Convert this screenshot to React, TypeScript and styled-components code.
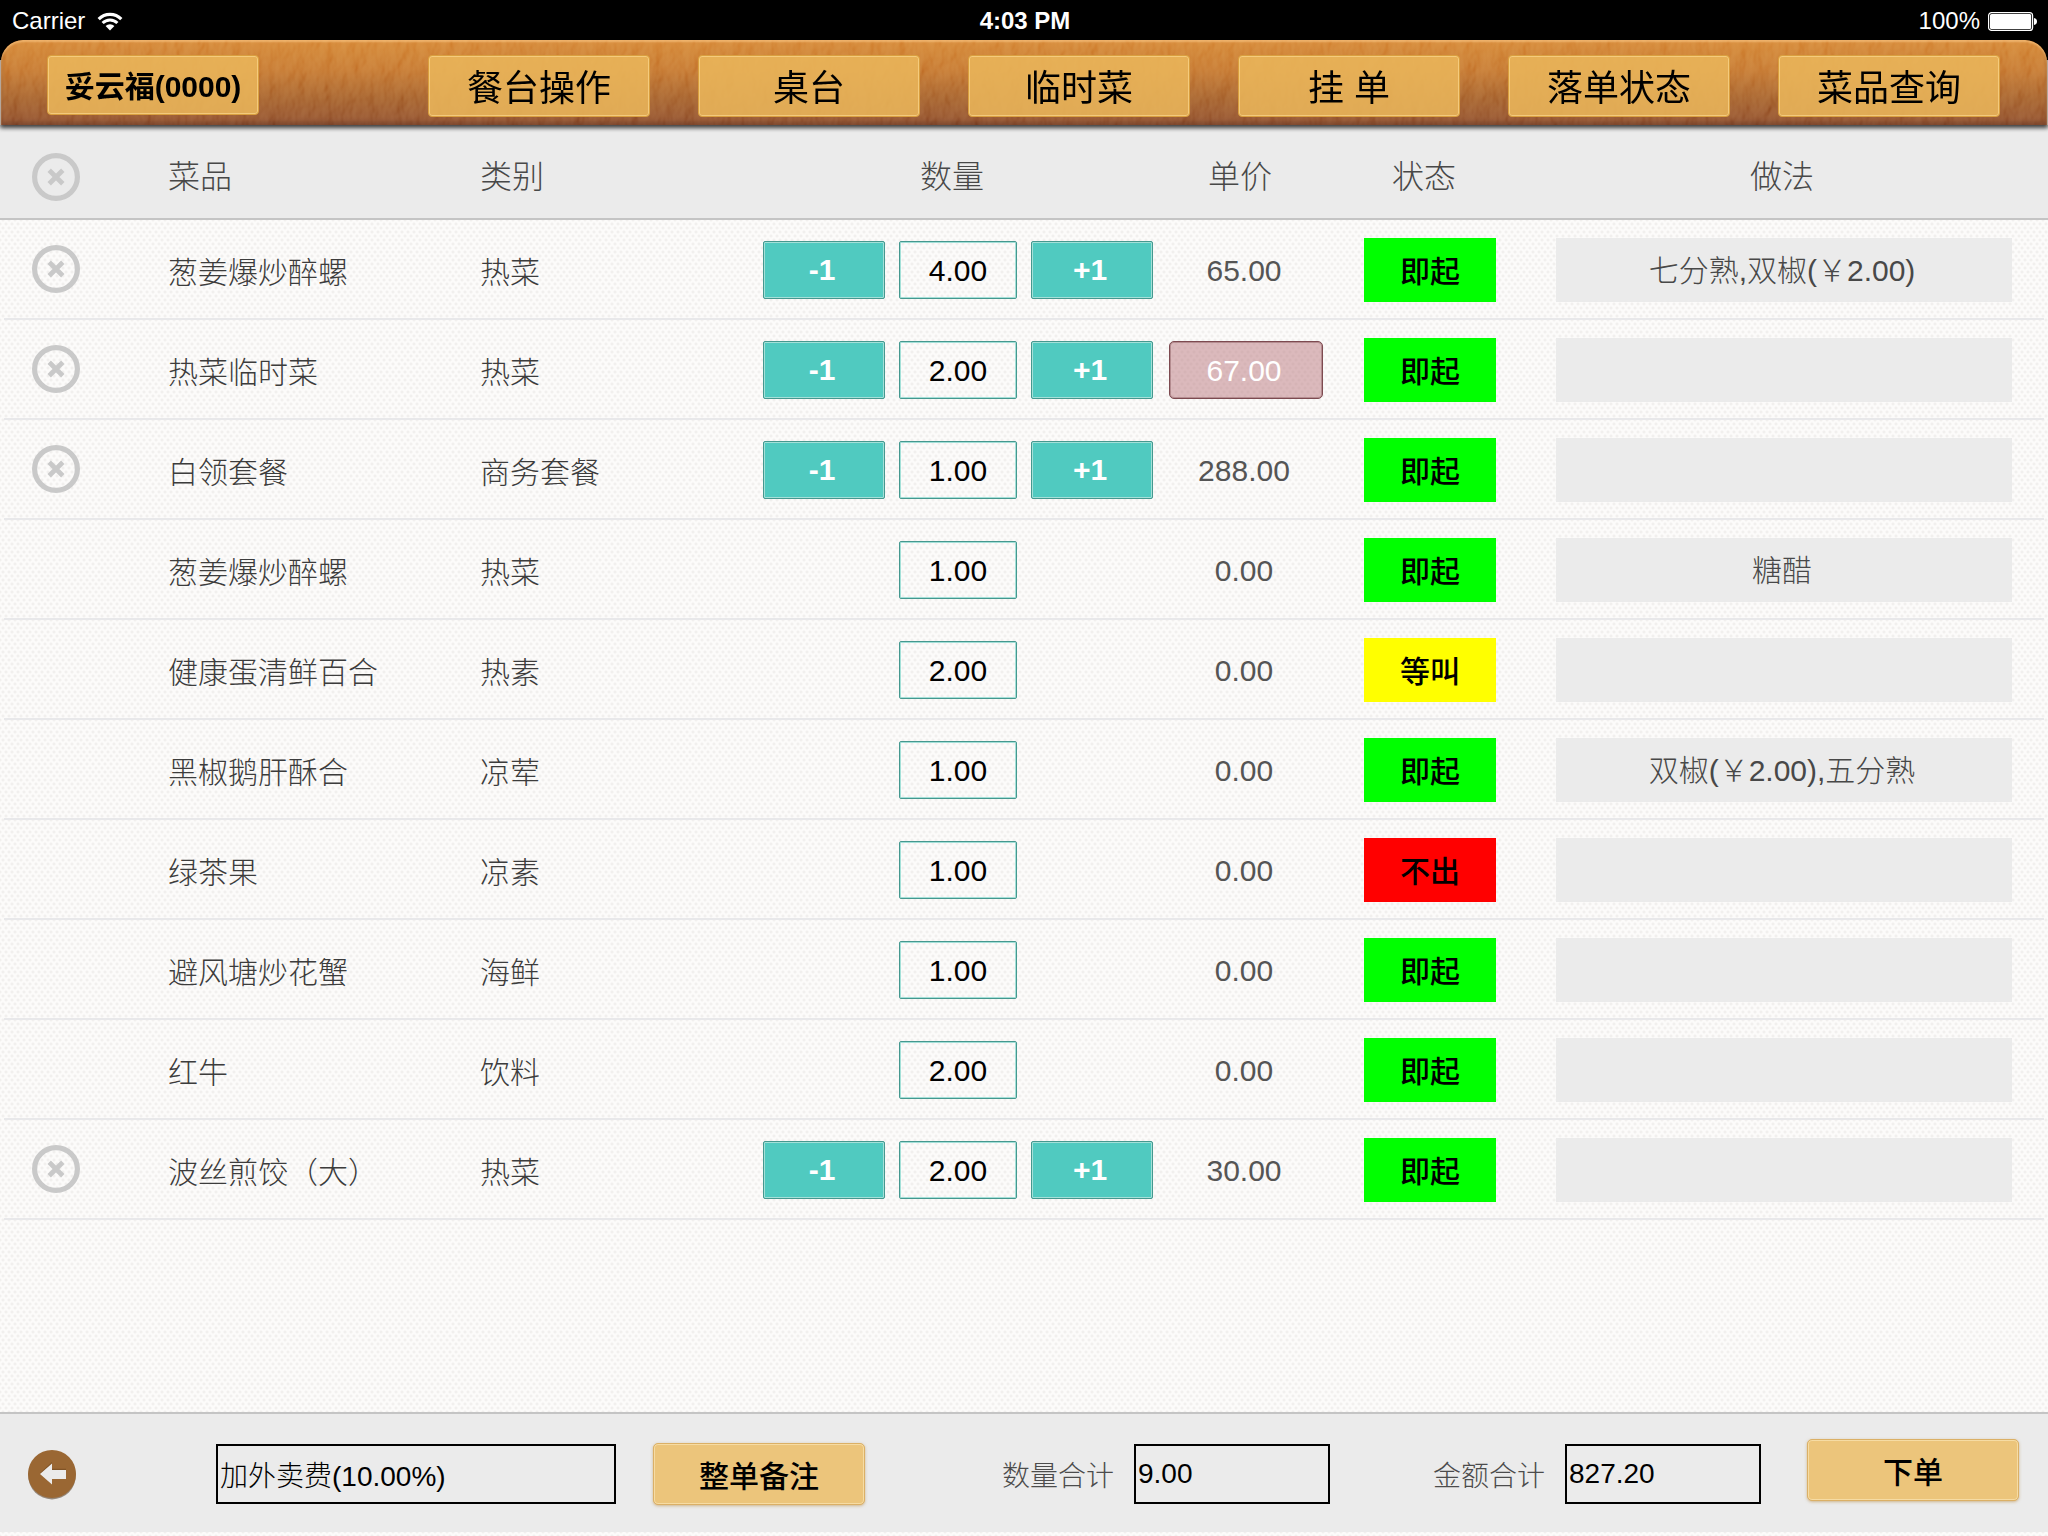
import React, { useState } from "react";
import styled, { createGlobalStyle, css } from "styled-components";

const GlobalStyle = createGlobalStyle`
  * { box-sizing: border-box; }
  body {
    margin: 0;
    background-color: #fcfbfa;
    background-image:
      radial-gradient(circle, rgba(120, 110, 100, 0.08) 0 1px, transparent 2px),
      radial-gradient(circle, rgba(120, 110, 100, 0.08) 0 1px, transparent 2px);
    background-size: 6px 8px;
    background-position: 0 0, 3px 4px;
    font-family: "Liberation Sans", "Noto Sans CJK SC", sans-serif;
    color: #555;
  }
  button, input {
    font-family: inherit;
    margin: 0;
    padding: 0;
    border: 0;
    background: none;
    border-radius: 0;
    outline: none;
  }
  button { cursor: pointer; }
`;

const Page = styled.div`
  min-height: 100vh;
  padding-bottom: 4px;
  display: flex;
  flex-direction: column;
`;

const StatusBar = styled.div`
  height: 40px;
  padding: 2px 10px 0 12px;
  display: grid;
  grid-template-columns: 1fr auto 1fr;
  align-items: center;
  background: #000;
  color: #fff;
  font-size: 24px;
  line-height: 38px;
`;

const StatusGroup = styled.div<{ $end?: boolean }>`
  display: flex;
  align-items: center;
  justify-content: ${(p) => (p.$end ? "flex-end" : "flex-start")};
  gap: ${(p) => (p.$end ? 8 : 12)}px;
`;

const Clock = styled.time`
  font-weight: 700;
`;

const TopBar = styled.header`
  position: relative;
  z-index: 1;
  background: linear-gradient(#000 20px, #b5a79c 20px);
`;

const Leather = styled.div`
  position: relative;
  height: 85px;
  margin: 0 1px;
  padding: 15px 47px 0 46px;
  display: flex;
  align-items: flex-start;
  justify-content: space-between;
  border-radius: 22px 22px 0 0;
  overflow: hidden;
  background: linear-gradient(#d48330 0%, #c4742c 35%, #a25c28 70%, #8d4b2a 100%);
`;

const LeatherShadow = styled.div`
  border-radius: 22px 22px 0 0;
  box-shadow: 0 3px 4px rgba(0, 0, 0, 0.75);
`;

const Grain = styled.svg`
  position: absolute;
  inset: 0;
  width: 100%;
  height: 100%;
  mix-blend-mode: soft-light;
`;

const Edge = styled.div`
  position: absolute;
  inset: 0;
  border-radius: 22px 22px 0 0;
  box-shadow: inset 0 2px 2px rgba(255, 205, 140, 0.6), inset 0 -3px 4px rgba(70, 35, 25, 0.35);
`;

const Nav = styled.nav`
  display: flex;
  gap: 48px;
`;

const BarButton = styled.button<{ $user?: boolean }>`
  position: relative;
  padding-bottom: 2px;
  border: 1px solid #d99f3f;
  border-radius: 4px;
  box-shadow: inset 0 0 0 1px rgba(255, 222, 150, 0.6);
  background: rgba(233, 181, 90, 0.88);
  color: #000;
  ${(p) =>
    p.$user
      ? css`
          width: 212px;
          height: 60px;
          font-size: 30px;
          font-weight: 700;
        `
      : css`
          width: 222px;
          height: 62px;
          font-size: 36px;
        `}
`;

const Main = styled.main`
  flex: 1;
`;

const OrderTable = styled.table`
  width: 100%;
  table-layout: fixed;
  border-collapse: collapse;
`;

const HeadRow = styled.tr`
  height: 95px;
  background: linear-gradient(#c4c4c4, #c4c4c4) bottom / 100% 2px no-repeat #ebebeb;
`;

const HeadCell = styled.th<{ $center?: boolean; $icon?: boolean }>`
  padding: ${(p) => (p.$icon ? "8px 0 0 32px" : p.$center ? "8px 12px 0 0" : "8px 0 0")};
  font-size: 32px;
  line-height: 40px;
  font-weight: 300;
  color: #484848;
  text-align: ${(p) => (p.$center ? "center" : "left")};
`;

const Row = styled.tr`
  height: 100px;
  background: linear-gradient(#e8e8ea, #e8e8ea) bottom / calc(100% - 8px) 2px no-repeat;
`;

const Cell = styled.td<{ $icon?: boolean; $price?: boolean; $wide?: boolean }>`
  padding: ${(p) => (p.$icon ? "0 0 2px 32px" : p.$wide ? "0 36px 0 28px" : p.$price ? "2px 4px 0 0" : "0")};
  font-size: 30px;
  line-height: 40px;
  text-align: ${(p) => (p.$price ? "center" : "left")};
`;

const CjkCell = styled.td`
  padding: 6px 0 0;
  font-size: 30px;
  line-height: 40px;
  font-weight: 300;
  color: #3c3c3c;
`;

const Stepper = styled.div`
  display: grid;
  grid-template-columns: 122px 118px 122px;
  gap: 14px;
  justify-content: center;
`;

const StepButton = styled.button`
  height: 58px;
  padding-right: 4px;
  border: 1px solid #45988f;
  border-radius: 2px;
  box-shadow: inset 0 0 0 1px #a4e0d8;
  background: #50cac0;
  color: #fff;
  font-size: 30px;
  font-weight: 700;
`;

const Quantity = styled.input`
  grid-column: 2;
  width: 100%;
  height: 58px;
  padding-top: 2px;
  border: 1px solid #45988f;
  border-radius: 2px;
  box-shadow: inset 0 0 0 1px #a4e0d8;
  color: #000;
  font-size: 30px;
  text-align: center;
`;

const PriceCell = styled.td`
  padding: 0;
`;

const PriceInput = styled.input`
  display: block;
  width: 154px;
  height: 58px;
  padding: 2px 4px 0 0;
  margin: 0 auto;
  border: 1px solid #7d4a50;
  border-radius: 5px;
  box-shadow: inset 0 0 0 1px rgba(125, 74, 80, 0.4);
  background: rgba(186, 120, 126, 0.5);
  color: #fff;
  font-size: 30px;
  text-align: center;
`;

const StatusButton = styled.button<{ $tone: string }>`
  display: block;
  width: 132px;
  height: 64px;
  padding-bottom: 2px;
  margin: 0 auto;
  background: ${(p) => p.$tone};
  color: #000;
  font-size: 30px;
  font-weight: 500;
`;

const MethodButton = styled.button`
  display: block;
  width: 100%;
  height: 64px;
  padding: 0 4px 4px 0;
  background: #ebebeb;
  color: #484848;
  font-size: 30px;
  font-weight: 300;
`;

const IconButton = styled.button`
  display: block;
  width: 48px;
  height: 48px;
  svg { display: block; overflow: visible; }
`;

const Footer = styled.footer`
  height: 120px;
  padding: 2px 0 0 28px;
  display: grid;
  grid-template-columns: 188fr 437fr 349fr 431fr 374fr 241fr;
  align-items: center;
  border-top: 2px solid #c4c4c4;
  background: #ebebeb;
`;

const Total = styled.label`
  display: flex;
  align-items: center;
  gap: 20px;
  font-size: 28px;
  font-weight: 300;
  color: #4c4c4c;
`;

const BoxInput = styled.input<{ $wide?: boolean }>`
  width: ${(p) => (p.$wide ? 400 : 196)}px;
  height: 60px;
  padding: 0 2px;
  border: 2px solid #000;
  color: #000;
  font-size: 28px;
  font-weight: 300;
`;

const ActionButton = styled.button`
  width: 212px;
  height: 62px;
  border: 1px solid #dbb066;
  border-radius: 5px;
  box-shadow: inset 0 0 0 1px #f6dca4, 0 1px 3px rgba(180, 130, 50, 0.5);
  background: #ecc57b;
  color: #000;
  font-size: 30px;
  font-weight: 500;
`;

const SubmitSlot = styled.div`
  padding-bottom: 8px;
`;

const RemoveIcon = () => (
  <svg width="48" height="48" viewBox="0 0 48 48" fill="none" stroke="#c9c9c9" aria-hidden="true">
    <circle cx="24" cy="24" r="21.4" strokeWidth="5.2" />
    <path d="M17.2 17.2 30.8 30.8M30.8 17.2 17.2 30.8" strokeWidth="4.8" />
  </svg>
);

const BackIcon = () => (
  <svg width="48" height="48" viewBox="0 0 48 48" aria-hidden="true">
    <circle cx="24" cy="25.6" r="23.8" fill="#5c4630" opacity="0.6" />
    <circle cx="24" cy="24" r="24" fill="#9a6733" />
    <path d="M12 23 24 12v6.8h14v2H24z" fill="#6f4720" opacity="0.6" />
    <path d="M12 24 24 13.4V20h14v9H24v5.6z" fill="#ebebeb" />
  </svg>
);

const WifiIcon = () => (
  <svg width="26" height="19" viewBox="0 0 26 19" fill="none" stroke="#fff" aria-hidden="true">
    <path d="M1.7 7.2a15.8 15.8 0 0 1 22.6 0" strokeWidth="3.2" />
    <path d="M5.6 11a10.4 10.4 0 0 1 14.8 0" strokeWidth="3" />
    <path d="M8.6 14.1a6.2 6.2 0 0 1 8.8 0L13 18.6z" fill="#fff" stroke="none" />
  </svg>
);

const BatteryIcon = () => (
  <svg width="50" height="19" viewBox="0 0 50 19" aria-hidden="true">
    <rect x="0.6" y="0.6" width="44" height="17.8" rx="3" fill="none" stroke="#fff" strokeWidth="1.2" />
    <rect x="2" y="2" width="41.2" height="15" rx="1.6" fill="#fff" />
    <path d="M46 6c2.200 .4 3 1.800 3 3.500s-.8 3.100-3 3.500z" fill="#fff" />
  </svg>
);

const LeatherGrain = () => (
  <Grain aria-hidden="true">
    <filter id="grain" x="0" y="0" width="100%" height="100%">
      <feTurbulence type="fractalNoise" baseFrequency="0.07 0.045" numOctaves="3" seed="7" result="n" />
      <feDiffuseLighting in="n" surfaceScale="3" lightingColor="#ffffff">
        <feDistantLight azimuth="200" elevation="42" />
      </feDiffuseLighting>
    </filter>
    <rect width="100%" height="100%" filter="url(#grain)" opacity="0.35" />
  </Grain>
);

type State = "即起" | "等叫" | "不出";

const tones: Record<State, string> = { 即起: "#00ff00", 等叫: "#ffff00", 不出: "#ff0000" };

interface Dish {
  name: string;
  kind: string;
  qty: number;
  price: string;
  state: State;
  method?: string;
  own?: boolean;
  openPrice?: boolean;
}

const dishes: Dish[] = [
  { name: "葱姜爆炒醉螺", kind: "热菜", qty: 4, price: "65.00", state: "即起", method: "七分熟,双椒(￥2.00)", own: true },
  { name: "热菜临时菜", kind: "热菜", qty: 2, price: "67.00", state: "即起", own: true, openPrice: true },
  { name: "白领套餐", kind: "商务套餐", qty: 1, price: "288.00", state: "即起", own: true },
  { name: "葱姜爆炒醉螺", kind: "热菜", qty: 1, price: "0.00", state: "即起", method: "糖醋" },
  { name: "健康蛋清鲜百合", kind: "热素", qty: 2, price: "0.00", state: "等叫" },
  { name: "黑椒鹅肝酥合", kind: "凉荤", qty: 1, price: "0.00", state: "即起", method: "双椒(￥2.00),五分熟" },
  { name: "绿茶果", kind: "凉素", qty: 1, price: "0.00", state: "不出" },
  { name: "避风塘炒花蟹", kind: "海鲜", qty: 1, price: "0.00", state: "即起" },
  { name: "红牛", kind: "饮料", qty: 2, price: "0.00", state: "即起" },
  { name: "波丝煎饺（大）", kind: "热菜", qty: 2, price: "30.00", state: "即起", own: true },
];

const columns = [168, 312, 276, 404, 172, 196, 520];
const menu = ["餐台操作", "桌台", "临时菜", "挂 单", "落单状态", "菜品查询"];

export default function App() {
  const [counts, setCounts] = useState(dishes.map((d) => d.qty));
  const step = (index: number, by: number) =>
    setCounts((list) => list.map((n, i) => (i === index ? Math.max(0, n + by) : n)));

  return (
    <Page>
      <GlobalStyle />
      <StatusBar>
        <StatusGroup>
          <span>Carrier</span>
          <WifiIcon />
        </StatusGroup>
        <Clock>4:03 PM</Clock>
        <StatusGroup $end>
          <span>100%</span>
          <BatteryIcon />
        </StatusGroup>
      </StatusBar>

      <TopBar>
        <LeatherShadow>
          <Leather>
            <LeatherGrain />
            <Edge />
            <BarButton $user>妥云福(0000)</BarButton>
            <Nav>
              {menu.map((item) => (
                <BarButton key={item}>{item}</BarButton>
              ))}
            </Nav>
          </Leather>
        </LeatherShadow>
      </TopBar>

      <Main>
        <OrderTable>
          <colgroup>
            {columns.map((width, i) => (
              <col key={i} style={{ width }} />
            ))}
          </colgroup>
          <thead>
            <HeadRow>
              <HeadCell $icon>
                <IconButton aria-label="全部删除">
                  <RemoveIcon />
                </IconButton>
              </HeadCell>
              <HeadCell>菜品</HeadCell>
              <HeadCell>类别</HeadCell>
              <HeadCell $center>数量</HeadCell>
              <HeadCell $center>单价</HeadCell>
              <HeadCell $center>状态</HeadCell>
              <HeadCell $center>做法</HeadCell>
            </HeadRow>
          </thead>
          <tbody>
            {dishes.map((dish, i) => (
              <Row key={i}>
                <Cell $icon>
                  {dish.own && (
                    <IconButton aria-label={`删除 ${dish.name}`}>
                      <RemoveIcon />
                    </IconButton>
                  )}
                </Cell>
                <CjkCell>{dish.name}</CjkCell>
                <CjkCell>{dish.kind}</CjkCell>
                <Cell>
                  <Stepper>
                    {dish.own && <StepButton onClick={() => step(i, -1)}>-1</StepButton>}
                    <Quantity aria-label="数量" readOnly value={counts[i].toFixed(2)} />
                    {dish.own && <StepButton onClick={() => step(i, 1)}>+1</StepButton>}
                  </Stepper>
                </Cell>
                {dish.openPrice ? (
                  <PriceCell>
                    <PriceInput aria-label="单价" defaultValue={dish.price} />
                  </PriceCell>
                ) : (
                  <Cell $price>{dish.price}</Cell>
                )}
                <Cell>
                  <StatusButton $tone={tones[dish.state]}>{dish.state}</StatusButton>
                </Cell>
                <Cell $wide>
                  <MethodButton aria-label="做法">{dish.method}</MethodButton>
                </Cell>
              </Row>
            ))}
          </tbody>
        </OrderTable>
      </Main>

      <Footer>
        <IconButton aria-label="返回">
          <BackIcon />
        </IconButton>
        <BoxInput $wide aria-label="附加费" defaultValue="加外卖费(10.00%)" />
        <ActionButton>整单备注</ActionButton>
        <Total>
          数量合计
          <BoxInput readOnly value="9.00" />
        </Total>
        <Total>
          金额合计
          <BoxInput readOnly value="827.20" />
        </Total>
        <SubmitSlot>
          <ActionButton>下单</ActionButton>
        </SubmitSlot>
      </Footer>
    </Page>
  );
}
